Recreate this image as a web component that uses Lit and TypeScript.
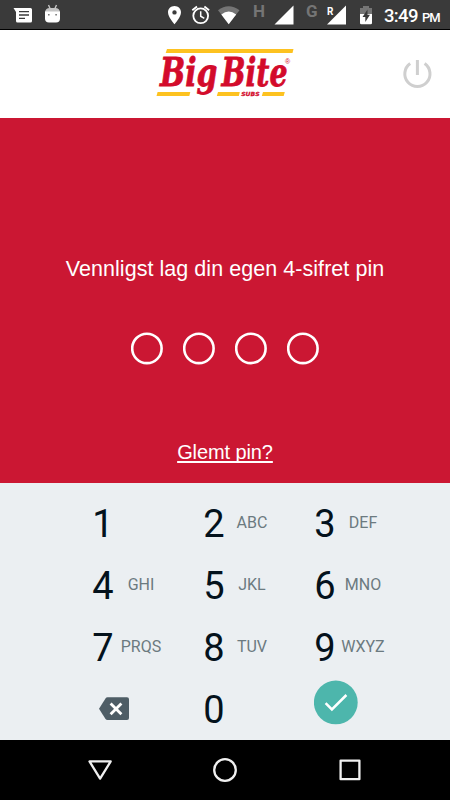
import { LitElement, html, css, svg } from "lit";
import { customElement, property } from "lit/decorators.js";

@customElement("status-bar")
class StatusBar extends LitElement {
  static styles = css`
    :host { display: block; height: 29px; background: #3a3a3a; border-bottom: 1px solid #000; }
    svg { display: block; }
    .clock { font: 500 18.5px Roboto, sans-serif; fill: #fff; }
    .pm { font: 500 13px Roboto, sans-serif; fill: #fff; }
    .net { font: 700 17px Roboto, sans-serif; fill: #757575; }
    .roam { font: 700 10px Roboto, sans-serif; fill: #fff; }
  `;
  render() {
    return html`<svg width="450" height="29" viewBox="0 0 450 29">
      <path fill="#fff" d="M13.5 8H30.5Q32 8 32 9.5V21Q32 22.5 30.5 22.5H17.5Q16 22.5 16 21V12Z" />
      <path stroke="#3a3a3a" stroke-width="1.3" d="M19 11.7H29M19 15H29M19 18.3H25" />
      <path stroke="#c4c4c4" stroke-width="1.4" d="M48.5 5L50.5 9.5M56.5 5L54.5 9.5" />
      <path fill="#c4c4c4" d="M45 13Q45 8 50 8H55Q60 8 60 13Z" />
      <path fill="#fff" d="M45 11.5H60V18.5Q60 22.5 56 22.5H49Q45 22.5 45 18.5Z" />
      <path fill="#777" d="M48 14h1.6v1.6h-1.6zM55.3 14h1.6v1.6h-1.6z" />
      <path fill="#fff" fill-rule="evenodd" d="M174.5 6C170.8 6 168 8.8 168 12.3C168 17.2 174.5 24.3 174.5 24.3S181 17.2 181 12.3C181 8.8 178.2 6 174.5 6ZM174.5 10.2a2.2 2.2 0 1 1 0 4.4a2.2 2.2 0 1 1 0-4.4Z" />
      <g fill="none" stroke="#fff" stroke-width="1.8">
        <circle cx="200.7" cy="15.8" r="7.4" />
        <path d="M192.3 10.3L197 6.5M209.1 10.3L204.4 6.5" />
        <path stroke-width="1.5" d="M200.7 11.3V16.2L204.3 18.3" />
      </g>
      <path fill="#757575" d="M218 10.3Q228.5 2 239.5 10.3L228.7 24Z" />
      <path fill="#fff" d="M221.3 14.4Q228.7 8.4 236.2 14.4L228.7 24.3Z" />
      <text class="net" x="253" y="16.8">H</text>
      <path fill="#fff" d="M293.5 5.5V24.5H274.5Z" />
      <text class="net" x="306" y="16.8">G</text>
      <path fill="#fff" d="M346 5.5V24.5H327Z" />
      <text class="roam" x="327" y="15">R</text>
      <path fill="#757575" d="M360 8h3V6h6v2h3v8h-12z" />
      <path fill="#fff" d="M360 14h12v9q0 1.3-1.3 1.3h-9.4q-1.3 0-1.3-1.3z" />
      <path fill="#3a3a3a" d="M367.5 9.5L362.5 17H365.3V22L370 14.7H367.5Z" />
      <text class="clock" x="384" y="22" textLength="34.5">3:49</text>
      <text class="pm" x="422" y="22" textLength="18.5">PM</text>
    </svg>`;
  }
}

@customElement("brand-header")
class BrandHeader extends LitElement {
  static styles = css`
    :host {
      display: grid; grid-template-columns: 1fr 160px 1fr; align-items: center;
      height: 88px; background: #fff;
    }
    svg { display: block; overflow: visible; }
    .logo { grid-column: 2; align-self: start; margin-top: 10px; }
    .power { justify-self: end; margin-right: 17px; }
    .word { font: italic 700 39px "DejaVu Serif", serif; fill: #d30b2b; stroke: #d30b2b; stroke-width: .8; }
    .subs { font: italic 700 5.6px "DejaVu Sans", sans-serif; fill: #d30b2b; stroke: #d30b2b; stroke-width: .25; }
    .reg { font: 7px "Liberation Sans", sans-serif; fill: #d30b2b; }
  `;
  render() {
    return html`<svg class="logo" width="160" height="65" viewBox="0 0 160 65">
        <path fill="#fdc220" d="M22 9H148.5L147.5 13H20.7ZM12.6 52H45.3L44.3 56H11.5ZM73 52H94.8L93.8 56H71.8ZM118 52H139.8L138.7 56H116.8Z" />
        <text class="word" x="15" y="45.5" textLength="57.5" lengthAdjust="spacingAndGlyphs">Big</text>
        <text class="word" x="76.5" y="45.5" textLength="66" lengthAdjust="spacingAndGlyphs">Bite</text>
        <text class="subs" x="96.2" y="56.2" textLength="18.5" lengthAdjust="spacingAndGlyphs">SUBS</text>
        <text class="reg" x="140" y="23.8">®</text>
      </svg>
      <svg class="power" width="32" height="32" viewBox="0 0 32 32" fill="none" stroke="#cfcfcf" stroke-width="3">
        <path d="M16.4 2V17M9.2 5.6A12.6 12.6 0 1 0 23.6 5.6" />
      </svg>`;
  }
}

@customElement("pin-panel")
class PinPanel extends LitElement {
  static styles = css`
    :host {
      display: flex; flex-direction: column; align-items: center; box-sizing: border-box;
      height: 365px; padding-top: 138px; background: #cb1733; color: #fff;
      font: 21.5px/26px "Liberation Sans", Arial, sans-serif;
    }
    .prompt { white-space: nowrap; letter-spacing: .05px; }
    .dots { display: flex; gap: 20px; margin-top: 50px; }
    .dots svg { display: block; fill: none; stroke: #fff; stroke-width: 2.6; }
    .forgot { margin-top: 74px; font-size: 20px; letter-spacing: -.1px; color: inherit; text-decoration: underline; text-decoration-thickness: 1.5px; text-underline-offset: 1.5px; text-decoration-skip-ink: none; }
  `;
  render() {
    return html`<div class="prompt">Vennligst lag din egen 4-sifret pin</div>
      <div class="dots">${[0, 1, 2, 3].map(() => html`<svg width="32" height="33" viewBox="0 0 32 33"><circle cx="15.9" cy="16.4" r="14.7" /></svg>`)}</div>
      <a class="forgot">Glemt pin?</a>`;
  }
}

@customElement("pin-key")
class PinKey extends LitElement {
  @property() digit = "";
  @property() letters = "";
  static styles = css`
    :host { display: flex; align-items: center; height: 62px; font-family: Roboto, sans-serif; }
    .digit { width: 22px; text-align: center; font-size: 38px; line-height: 62px; color: #04121c; }
    .letters { width: 54px; text-align: center; font-size: 16px; line-height: 60px; height: 62px; color: #6b7a80; }
  `;
  render() {
    return html`<span class="digit">${this.digit}</span><span class="letters">${this.letters}</span>`;
  }
}

@customElement("pin-keypad")
class PinKeypad extends LitElement {
  static styles = css`
    :host {
      display: grid; grid-template-columns: repeat(3, 111px); grid-auto-rows: 62px;
      box-sizing: border-box; height: 257px; padding: 10px 0 0 92px; background: #ebeff2;
    }
    svg { display: block; }
    .erase { margin: 17px 0 0 7px; }
    .confirm { margin: 1px 0 0; }
  `;
  render() {
    const keys = [["1", ""], ["2", "ABC"], ["3", "DEF"], ["4", "GHI"], ["5", "JKL"], ["6", "MNO"], ["7", "PRQS"], ["8", "TUV"], ["9", "WXYZ"]];
    return html`${keys.map(([d, l]) => html`<pin-key digit=${d} letters=${l}></pin-key>`)}
      <svg class="erase" width="31" height="26" viewBox="0 0 31 26">
        <path fill="#4e5d66" d="M8.5 1.3H28Q30 1.3 30 3.3V22.1Q30 24.1 28 24.1H8.5Q7.3 24.1 6.5 23L0 12.7L6.5 2.4Q7.3 1.3 8.5 1.3Z" />
        <path stroke="#fff" stroke-width="2.8" d="M11.6 7.4L22.4 18.2M22.4 7.4L11.6 18.2" />
      </svg>
      <pin-key digit="0"></pin-key>
      <svg class="confirm" width="45" height="45" viewBox="0 0 45 45">
        <circle cx="21.8" cy="22.4" r="21.9" fill="#4db6ac" />
        <path fill="none" stroke="#fff" stroke-width="2.5" d="M11.6 23.2L17.9 29.5L32.4 15" />
      </svg>`;
  }
}

@customElement("nav-bar")
class NavBar extends LitElement {
  static styles = css`
    :host { display: flex; justify-content: center; align-items: center; gap: 97px; height: 60px; background: #000; }
    svg { display: block; fill: none; stroke: #f0f0f0; stroke-width: 2.3; stroke-linejoin: round; }
  `;
  render() {
    const shapes = [
      svg`<path d="M3.5 5.4H24.7L14.1 22.6Z"/>`,
      svg`<circle cx="14" cy="14" r="10.8"/>`,
      svg`<rect x="4.6" y="4.6" width="18.8" height="18.6"/>`,
    ];
    return html`${shapes.map((s) => html`<svg width="28" height="28" viewBox="0 0 28 28">${s}</svg>`)}`;
  }
}

@customElement("app-root")
class AppRoot extends LitElement {
  static styles = css`
    :host { display: flex; flex-direction: column; width: 450px; height: 800px; overflow: hidden; }
  `;
  render() {
    return html`<status-bar></status-bar><brand-header></brand-header><pin-panel></pin-panel><pin-keypad></pin-keypad><nav-bar></nav-bar>`;
  }
}
